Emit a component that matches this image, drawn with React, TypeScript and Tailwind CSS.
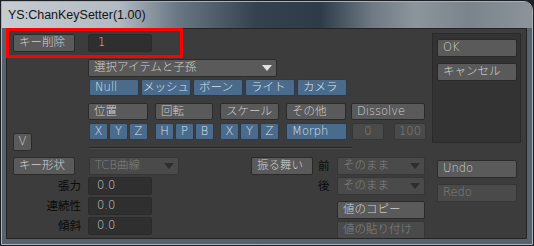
import React from 'react';

const FONT = "font-['Liberation_Sans','Noto_Sans_CJK_JP',sans-serif]";
const UI = "font-['DejaVu_Sans','Noto_Sans_CJK_JP',sans-serif]";

type Tone = 'normal' | 'blue' | 'off';

const toneCls: Record<Tone, string> = {
  normal: 'bg-[#5a5a5a] border-[#2a2a2a] text-[#cfcfcf]',
  blue: 'bg-[#4b6b8c] border-[#2b3b4c] text-[#d8e0e8]',
  off: 'bg-[#4a4a4a] border-[#363636] text-[#838383]',
};

const Btn: React.FC<{ tone?: Tone; className?: string; center?: boolean; children: React.ReactNode }> = ({
  tone = 'normal',
  className = '',
  center = false,
  children,
}) => (
  <div
    className={`flex shrink-0 items-center overflow-hidden rounded-[2px] border text-[11.5px] leading-none font-extralight whitespace-nowrap ${UI} ${
      center ? 'justify-center' : 'pl-[5px]'
    } ${toneCls[tone]} ${className}`}
  >
    {children}
  </div>
);

const Arrow: React.FC<{ color: string }> = ({ color }) => (
  <svg width="10" height="6" viewBox="0 0 10 6" className="mr-[4px] ml-auto shrink-0">
    <path d="M0 0 H10 L5 6 Z" fill={color} />
  </svg>
);

const Field: React.FC<{ value: string }> = ({ value }) => (
  <div className={`flex h-[18px] w-[64px] items-center rounded-[2px] border border-[#2a2a2a] bg-[#2f2f2f] pl-[8px] text-[11.5px] font-extralight text-[#cccccc] ${UI}`}>
    {value}
  </div>
);

const Label: React.FC<{ children: React.ReactNode }> = ({ children }) => (
  <div className={`w-[75px] pr-[1px] text-right text-[11.5px] leading-[18px] text-[#0a0a0a] ${UI}`}>{children}</div>
);

export default function App() {
  return (
    <div className={`relative h-[246px] w-[534px] bg-[#1c2024] p-px ${FONT}`}>
      <div className="flex h-full flex-col rounded-tr-[9px] border border-[#a9b1b8] bg-[#56636e]">
        {/* Title bar */}
        <div className="flex h-[26px] items-center rounded-tr-[8px] bg-[linear-gradient(90deg,#c6ccd2_0%,#b2bac2_22%,#6a7885_33%,#34424f_48%,#2e3c49_60%,#6f7a84_70%,#8d959c_78%,#7b848c_88%,#8c939a_100%)] pl-[6px]">
          <span className="text-[12.5px] text-[#141414]">YS:ChanKeySetter(1.00)</span>
        </div>

        {/* Panel */}
        <div className="ml-[4px] flex h-[211px] w-[521px] overflow-hidden border border-[#242424] bg-[#3c3c3c]">
          {/* Left column */}
          <div className="flex w-[425px] flex-col">
            <div className="mt-[5px] flex pl-[6px]">
              <Btn className="h-[18px] w-[62px]">キー削除</Btn>
              <div className={`ml-[13px] flex h-[18px] w-[64px] items-center rounded-[2px] border border-[#2a2a2a] bg-[#2f2f2f] pl-[9px] text-[11.5px] font-extralight text-[#cccccc] ${UI}`}>
                1
              </div>
            </div>

            <div className="mt-[7px] pl-[81px]">
              <Btn className="h-[18px] w-[189px]">
                選択アイテムと子孫
                <Arrow color="#e0e0e0" />
              </Btn>
            </div>

            <div className="mt-[2px] flex gap-[2px] pl-[82px]">
              <Btn tone="blue" className="h-[17px] w-[50px]">Null</Btn>
              <Btn tone="blue" center className="h-[17px] w-[50px]">メッシュ</Btn>
              <Btn tone="blue" className="h-[17px] w-[50px]">ボーン</Btn>
              <Btn tone="blue" className="h-[17px] w-[50px]">ライト</Btn>
              <Btn tone="blue" className="h-[17px] w-[50px]">カメラ</Btn>
            </div>

            <div className="mt-[7px] flex items-start">
              <div className="w-[81px] pl-[6px]">
                <Btn center className="mt-[30px] h-[18px] w-[19px]">
                  V
                </Btn>
              </div>
              <div className="flex flex-col">
                <div className="flex gap-[7px]">
                  <Btn className="h-[17px] w-[60px]">位置</Btn>
                  <Btn className="h-[17px] w-[58px]">回転</Btn>
                  <Btn className="h-[17px] w-[59px]">スケール</Btn>
                  <Btn className="h-[17px] w-[60px]">その他</Btn>
                  <Btn className="-ml-[2px] h-[17px] w-[74px]">Dissolve</Btn>
                </div>
                <div className="mt-[3px] flex">
                  <div className="flex gap-px pl-px">
                    <Btn tone="blue" center className="h-[17px] w-[19px]">X</Btn>
                    <Btn tone="blue" center className="h-[17px] w-[19px]">Y</Btn>
                    <Btn tone="blue" center className="h-[17px] w-[19px]">Z</Btn>
                  </div>
                  <div className="ml-[7px] flex gap-px">
                    <Btn tone="blue" center className="h-[17px] w-[19px]">H</Btn>
                    <Btn tone="blue" center className="h-[17px] w-[19px]">P</Btn>
                    <Btn tone="blue" center className="h-[17px] w-[19px]">B</Btn>
                  </div>
                  <div className="ml-[6px] flex gap-px">
                    <Btn tone="blue" center className="h-[17px] w-[19px]">X</Btn>
                    <Btn tone="blue" center className="h-[17px] w-[19px]">Y</Btn>
                    <Btn tone="blue" center className="h-[17px] w-[19px]">Z</Btn>
                  </div>
                  <Btn tone="blue" className="ml-[7px] h-[17px] w-[61px]">Morph</Btn>
                  <Btn tone="off" center className="ml-[5px] h-[17px] w-[32px]">0</Btn>
                  <Btn tone="off" center className="ml-[10px] h-[17px] w-[32px]">100</Btn>
                </div>
                <div className="mt-[7px] ml-px w-[263px] border-t border-b border-t-[#262626] border-b-[#4c4c4c]" />
              </div>
            </div>

            <div className="mt-[6px] flex">
              {/* key shape group */}
              <div className="flex w-[244px] flex-col gap-[2px]">
                <div className="flex pl-[6px]">
                  <Btn className="h-[18px] w-[62px]">キー形状</Btn>
                  <Btn tone="off" className="ml-[14px] h-[18px] w-[90px]">
                    TCB曲線
                    <Arrow color="#2e2e2e" />
                  </Btn>
                </div>
                <div className="flex">
                  <Label>張力</Label>
                  <div className="ml-[6px]"><Field value="0.0" /></div>
                </div>
                <div className="flex">
                  <Label>連続性</Label>
                  <div className="ml-[6px]"><Field value="0.0" /></div>
                </div>
                <div className="flex">
                  <Label>傾斜</Label>
                  <div className="ml-[6px]"><Field value="0.0" /></div>
                </div>
              </div>

              {/* behaviour group */}
              <div className="flex flex-col">
                <div className="flex">
                  <Btn className="h-[18px] w-[62px]">振る舞い</Btn>
                  <div className={`w-[24px] pl-[5px] text-[11.5px] leading-[18px] text-[#0a0a0a] ${UI}`}>前</div>
                  <Btn tone="off" className="h-[18px] w-[88px]">
                    そのまま
                    <Arrow color="#2e2e2e" />
                  </Btn>
                </div>
                <div className="mt-[2px] flex">
                  <div className="w-[62px]" />
                  <div className={`w-[24px] pl-[5px] text-[11.5px] leading-[18px] text-[#0a0a0a] ${UI}`}>後</div>
                  <Btn tone="off" className="h-[18px] w-[88px]">
                    そのまま
                    <Arrow color="#2e2e2e" />
                  </Btn>
                </div>
                <Btn className="mt-[6px] ml-[86px] h-[18px] w-[88px]">値のコピー</Btn>
                <Btn tone="off" className="mt-[2px] ml-[86px] h-[18px] w-[88px]">値の貼り付け</Btn>
              </div>
            </div>
          </div>

          {/* Right column */}
          <div className="flex flex-col">
            <div className="mt-[4px] flex h-[110px] w-[89px] flex-col gap-[6px] border border-[#2a2a2a] bg-[#333333] pt-[5px] pl-[4px]">
              <Btn className="h-[18px] w-[80px]">OK</Btn>
              <Btn className="h-[18px] w-[80px]">キャンセル</Btn>
            </div>
            <Btn className="mt-[17px] ml-[5px] h-[18px] w-[80px]">Undo</Btn>
            <Btn tone="off" className="mt-[6px] ml-[5px] h-[18px] w-[80px]">Redo</Btn>
          </div>
        </div>
      </div>

      {/* Red highlight annotation */}
      <div className="absolute top-[28px] left-[6px] h-[30px] w-[177px] border-[3px] border-[#ff0000]" />
    </div>
  );
}
